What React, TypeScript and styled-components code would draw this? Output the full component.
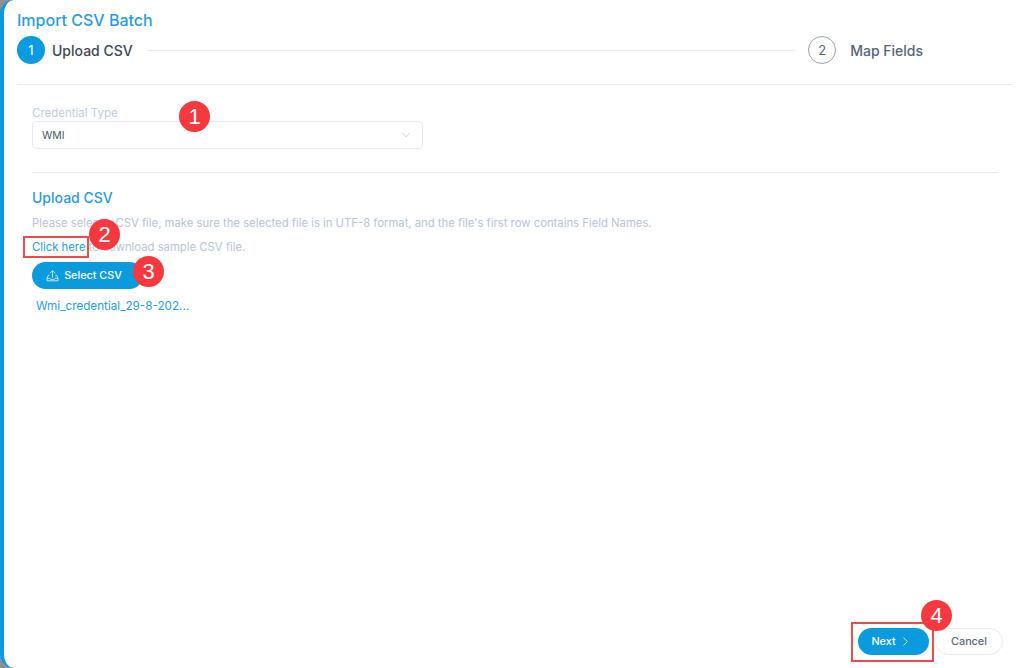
import { ReactNode } from "react";
import { createGlobalStyle, styled } from "styled-components";
import { LuChevronDown, LuChevronRight } from "react-icons/lu";

const BLUE = "#099bdd";

const GlobalStyle = createGlobalStyle`
  html, body {
    margin: 0;
    padding: 0;
    background: #8f8f8f;
  }
  body {
    font-family: Inter, "Open Sans", "Liberation Sans", sans-serif;
  }
`;

const Page = styled.div`
  position: relative;
  box-sizing: border-box;
  width: 1024px;
  height: 668px;
  display: flex;
  flex-direction: column;
  overflow: hidden;
  background: #fff;
  border-left: 4px solid ${BLUE};
  border-radius: 14px 0 0 14px;
`;

const Head = styled.div`
  padding: 12px 11px 0 13px;
`;

const Title = styled.div`
  height: 17px;
  font-size: 16px;
  line-height: 17px;
  font-weight: 500;
  color: #2a9ddc;
`;

const Stepper = styled.div`
  display: flex;
  align-items: center;
  height: 28px;
  margin-top: 7px;
  padding-bottom: 20px;
  border-bottom: 1px solid #e6ebf3;
`;

const StepCircle = styled.div<{ $active?: boolean }>`
  box-sizing: border-box;
  flex: none;
  width: 28px;
  height: 28px;
  display: flex;
  align-items: center;
  justify-content: center;
  border-radius: 50%;
  font-size: 13px;
  color: ${({ $active }) => ($active ? "#fff" : "#55637a")};
  background: ${({ $active }) => ($active ? BLUE : "#fff")};
  border: ${({ $active }) => ($active ? "none" : "1px solid #9aa3af")};
`;

const StepLabel = styled.div<{ $gap: number; $dim?: boolean }>`
  margin-left: ${({ $gap }) => $gap}px;
  font-size: 14px;
  font-weight: 500;
  white-space: nowrap;
  color: ${({ $dim }) => ($dim ? "#56647b" : "#3f4754")};
`;

const StepLine = styled.div`
  flex: 1;
  height: 1px;
  margin: 0 13px 0 14px;
  background: #e6ebf3;
`;

const Tail = styled.div`
  width: 90px;
  flex: none;
`;

const Body = styled.div`
  flex: 1;
  display: flex;
  flex-direction: column;
  padding: 21px 26px 0 28px;
`;

const FieldLabel = styled.div`
  height: 14px;
  font-size: 11.5px;
  line-height: 14px;
  color: #c2cddd;
`;

const Select = styled.div`
  box-sizing: border-box;
  width: 391px;
  height: 28px;
  margin-top: 1px;
  padding: 0 9px;
  display: flex;
  align-items: center;
  justify-content: space-between;
  border: 1px solid #e6ebf3;
  border-radius: 4px;
  font-size: 10.5px;
  color: #4d5664;
  svg {
    color: #b8c3d3;
  }
`;

const Divider = styled.div`
  height: 1px;
  margin-top: 23px;
  background: #e6ebf3;
`;

const SectionTitle = styled.div`
  margin-top: 16px;
  height: 18px;
  font-size: 14px;
  line-height: 18px;
  font-weight: 500;
  color: #2a9ddc;
`;

const Hint = styled.div<{ $top: number }>`
  margin-top: ${({ $top }) => $top}px;
  height: 14px;
  font-size: 11.3px;
  line-height: 14px;
  white-space: nowrap;
  color: #b7c6d9;
`;

const HintLink = styled.span`
  color: #2a9ddc;
`;

const PillButton = styled.div<{ $width: number; $outline?: boolean }>`
  box-sizing: border-box;
  width: ${({ $width }) => $width}px;
  height: 27px;
  display: flex;
  align-items: center;
  justify-content: center;
  border-radius: 14px;
  font-size: 10.8px;
  font-weight: 500;
  color: ${({ $outline }) => ($outline ? "#5c6675" : "#fff")};
  background: ${({ $outline }) => ($outline ? "#fff" : BLUE)};
  border: ${({ $outline }) => ($outline ? "1px solid #e6ebf3" : "none")};
`;

const SelectCsvButton = styled(PillButton)`
  margin-top: 8px;
  padding-right: 7px;
  gap: 5px;
`;

const NextButton = styled(PillButton)`
  gap: 2px;
  padding-right: 3px;
`;

const FileName = styled.div`
  margin: 10px 0 0 4px;
  height: 14px;
  font-size: 11.7px;
  line-height: 14px;
  color: #2a9ddc;
`;

const Footer = styled.div`
  display: flex;
  justify-content: flex-end;
  gap: 6px;
  padding: 0 21px 13px 0;
`;

/* callouts sit on top of the page, the way they do in the annotated docs shot */
const Marker = styled.div<{ $x: number; $y: number }>`
  position: absolute;
  left: ${({ $x }) => $x - 4}px;
  top: ${({ $y }) => $y}px;
  width: 31px;
  height: 31px;
  display: flex;
  align-items: center;
  justify-content: center;
  border-radius: 50%;
  background: #f6393f;
  color: #fff;
  font-family: "Liberation Sans", sans-serif;
  font-size: 22px;
`;

const Outline = styled.div<{ $x: number; $y: number; $w: number; $h: number }>`
  position: absolute;
  box-sizing: border-box;
  left: ${({ $x }) => $x - 4}px;
  top: ${({ $y }) => $y}px;
  width: ${({ $w }) => $w}px;
  height: ${({ $h }) => $h}px;
  border: 2px solid #ee4b4f;
`;

const UploadIcon = () => (
  <svg width="13" height="13" viewBox="0 0 13 13" fill="none" stroke="#d8eefa" strokeWidth="0.9">
    <path d="M6.5 8.5V2M4 4.2 6.5 1.6 9 4.2" />
    <path d="M3.6 6.2H2.4L1 9.4v2.4h11V9.4L10.6 6.2H9.4" />
    <path d="M1 9.4h3l.7 1h3.6l.7-1h3" />
  </svg>
);

const Callout = ({ x, y, children }: { x: number; y: number; children: ReactNode }) => (
  <Marker $x={x} $y={y}>
    {children}
  </Marker>
);

export default function App() {
  return (
    <>
      <GlobalStyle />
      <Page>
        <Head>
          <Title>Import CSV Batch</Title>
          <Stepper>
            <StepCircle $active>1</StepCircle>
            <StepLabel $gap={7}>Upload CSV</StepLabel>
            <StepLine />
            <StepCircle>2</StepCircle>
            <StepLabel $gap={14} $dim>
              Map Fields
            </StepLabel>
            <Tail />
          </Stepper>
        </Head>
        <Body>
          <FieldLabel>Credential Type</FieldLabel>
          <Select>
            WMI
            <LuChevronDown size={14} strokeWidth={1.25} />
          </Select>
          <Divider />
          <SectionTitle>Upload CSV</SectionTitle>
          <Hint $top={9}>
            Please select a CSV file, make sure the selected file is in UTF-8 format, and the
            file's first row contains Field Names.
          </Hint>
          <Hint $top={10}>
            <HintLink>Click here</HintLink> to download sample CSV file.
          </Hint>
          <SelectCsvButton $width={111}>
            <UploadIcon />
            Select CSV
          </SelectCsvButton>
          <FileName>Wmi_credential_29-8-202...</FileName>
        </Body>
        <Footer>
          <NextButton $width={71}>
            Next
            <LuChevronRight size={15} strokeWidth={1.25} />
          </NextButton>
          <PillButton $width={68} $outline>
            Cancel
          </PillButton>
        </Footer>
        <Outline $x={23} $y={236} $w={66} $h={22} />
        <Outline $x={851} $y={622} $w={83} $h={40} />
        <Callout x={179} y={101}>1</Callout>
        <Callout x={89} y={219}>2</Callout>
        <Callout x={133} y={256}>3</Callout>
        <Callout x={921} y={600}>4</Callout>
      </Page>
    </>
  );
}
